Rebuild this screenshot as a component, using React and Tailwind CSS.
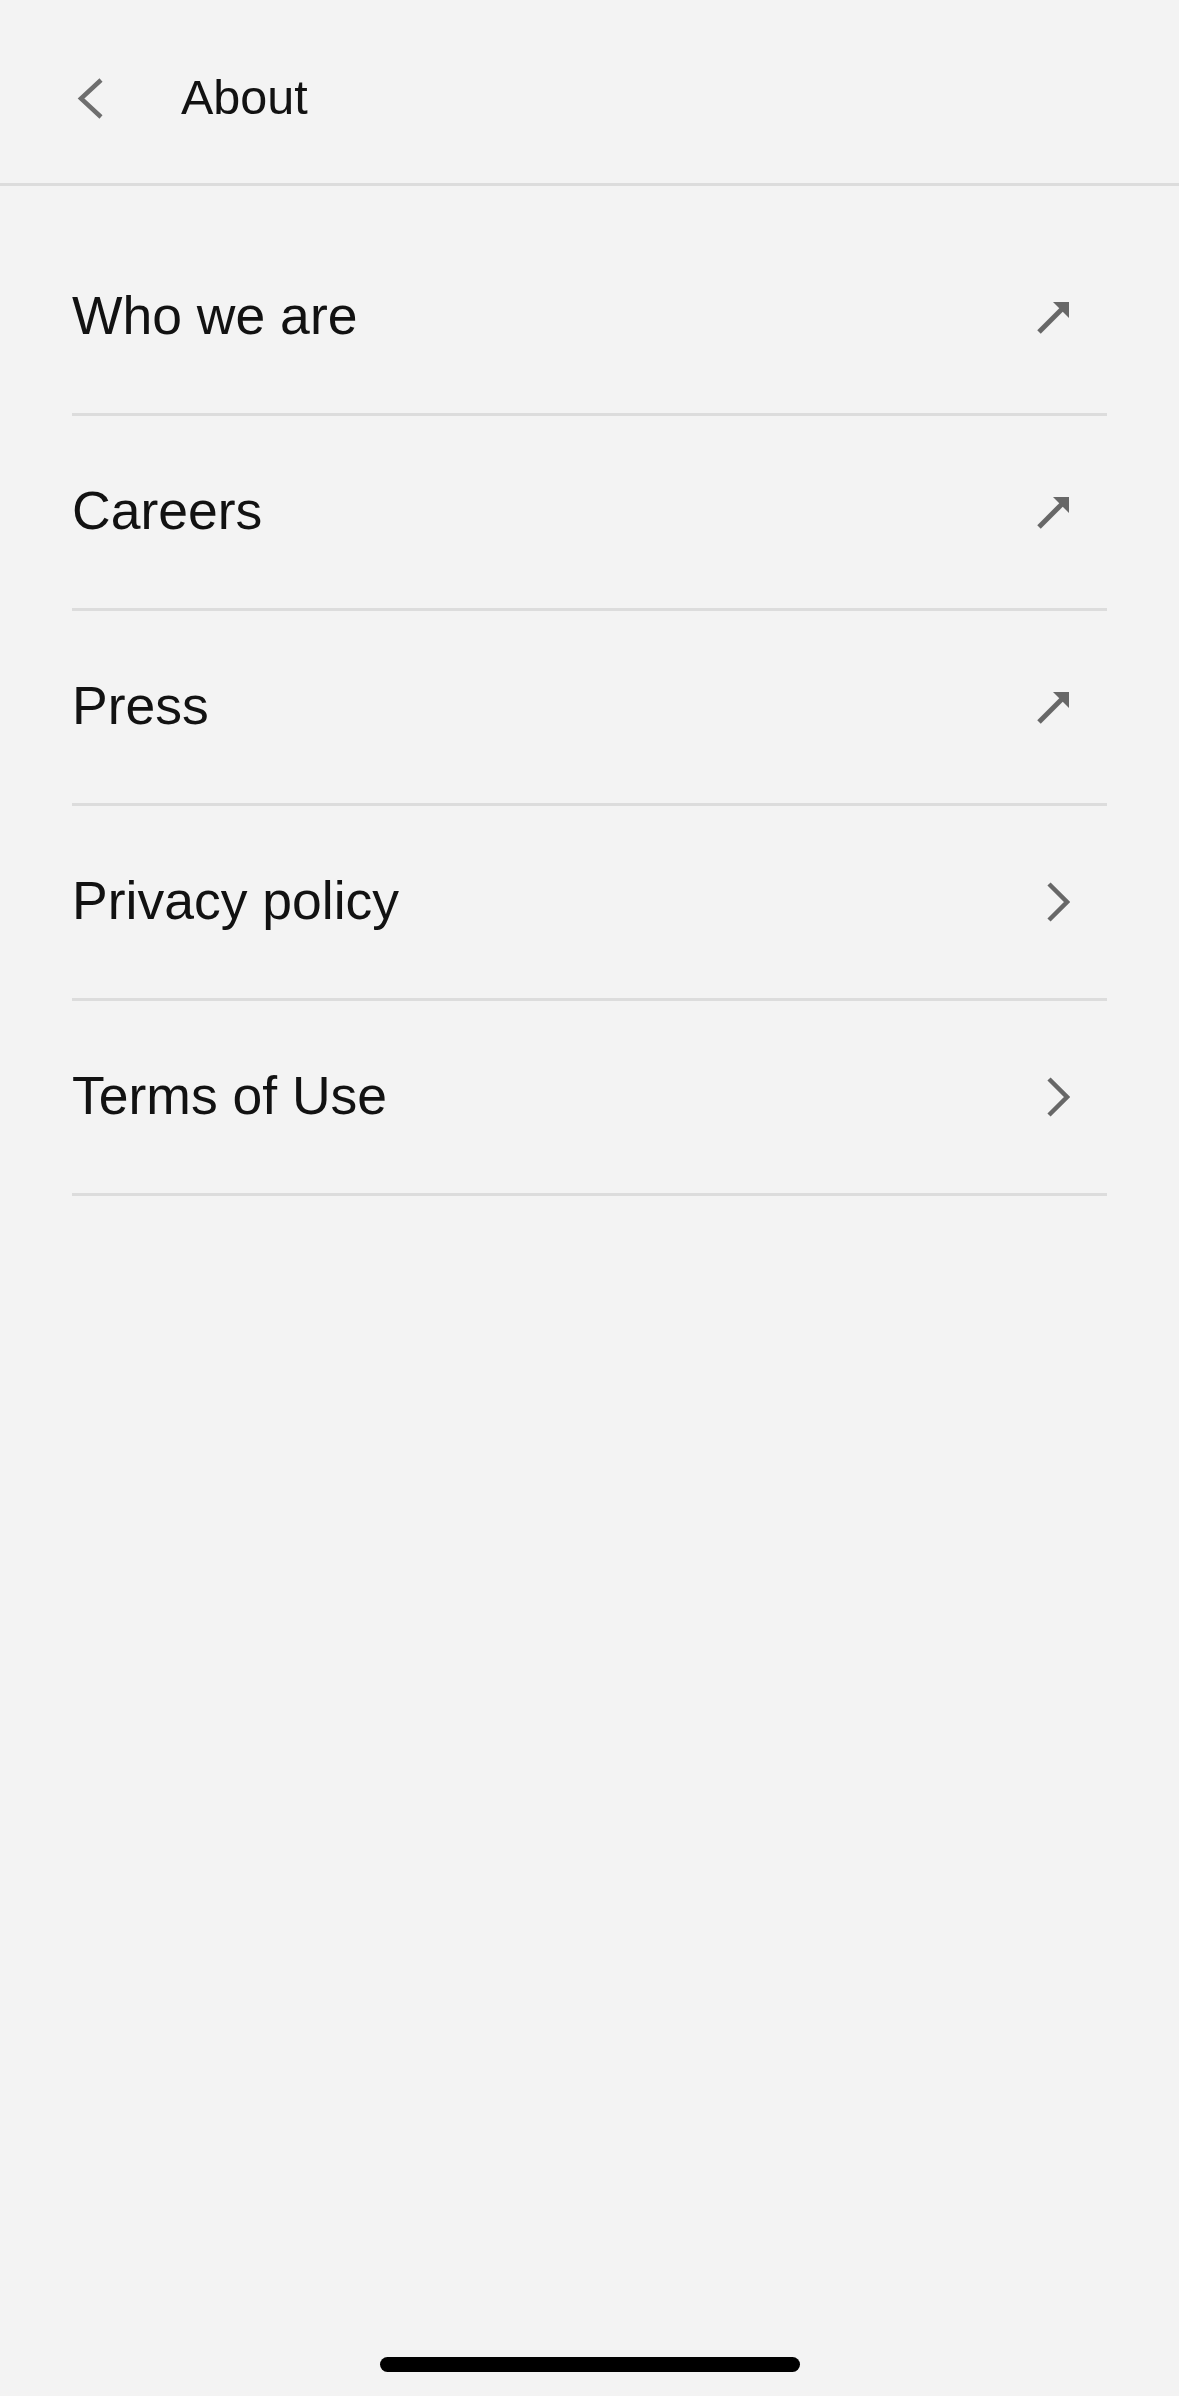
import React from "react";

function ArrowUpRight() {
  return (
    <svg width="34" height="34" viewBox="0 0 34 34" className="block">
      <line x1="3" y1="32" x2="28" y2="7" stroke="#676767" strokeWidth="5" />
      <polygon points="17,2 33,2 33,18" fill="#676767" />
    </svg>
  );
}

function ChevronRight() {
  return (
    <svg width="24" height="44" viewBox="0 0 24 44" className="block">
      <polyline points="3,4 21,22 3,40" fill="none" stroke="#676767" strokeWidth="4.5" />
    </svg>
  );
}

function ChevronLeft() {
  return (
    <svg width="28" height="44" viewBox="0 0 28 44" className="block">
      <polyline points="25,3 5,21.5 25,40" fill="none" stroke="#6e6e6e" strokeWidth="4.5" />
    </svg>
  );
}

const items = [
  { label: "Who we are", icon: "ext" },
  { label: "Careers", icon: "ext" },
  { label: "Press", icon: "ext" },
  { label: "Privacy policy", icon: "chev" },
  { label: "Terms of Use", icon: "chev" },
];

export default function App() {
  return (
    <div
      className="min-h-screen flex flex-col bg-[#f3f3f3] text-[#121212]"
      style={{ fontFamily: '"Liberation Sans", Arial, sans-serif' }}
    >
      <header className="h-[186px] flex items-center pt-[14px] pl-[76px] border-b-[3px] border-[#dcdcdc]">
        <ChevronLeft />
        <span className="ml-[77px] mb-[3px] text-[48.5px] leading-none">About</span>
      </header>
      <div className="pt-[35px] mx-[72px]">
        {items.map((it) => (
          <div
            key={it.label}
            className="h-[195px] flex items-center justify-between border-b-[3px] border-[#dcdcdc]"
          >
            <span className="mb-[3px] text-[53.5px] leading-none">{it.label}</span>
            <div className="pr-[37px]">
              {it.icon === "ext" ? <ArrowUpRight /> : <ChevronRight />}
            </div>
          </div>
        ))}
      </div>
      <div className="flex-1" />
      <div className="flex justify-center pb-[24px]">
        <div className="w-[420px] h-[15px] rounded-full bg-black" />
      </div>
    </div>
  );
}
